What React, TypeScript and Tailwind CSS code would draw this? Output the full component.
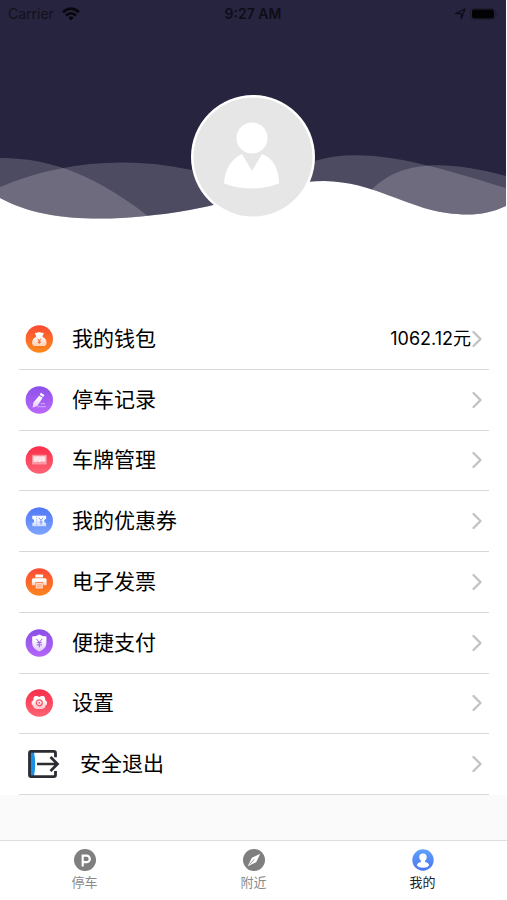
import React from 'react';
import { ChevronRight } from 'lucide-react';

type IconProps = { id: string; from: string; to: string; children: React.ReactNode };

const RoundIcon: React.FC<IconProps> = ({ id, from, to, children }) => (
  <svg viewBox="0 0 28 28" className="w-7 h-7 shrink-0" aria-hidden="true">
    <defs>
      <linearGradient id={id} x1="0" y1="0" x2="0" y2="1">
        <stop offset="0" stopColor={from} />
        <stop offset="1" stopColor={to} />
      </linearGradient>
      <linearGradient id={`${id}-fg`} x1="0" y1="0" x2="0" y2="1">
        <stop offset="0.3" stopColor="#fff" />
        <stop offset="1" stopColor="#fff" stopOpacity="0.65" />
      </linearGradient>
    </defs>
    <circle cx="14.3" cy="14" r="13.7" fill={`url(#${id})`} />
    {children}
  </svg>
);

const WalletIcon = () => (
  <RoundIcon id="wallet" from="#fb4a35" to="#fd8a1c">
    <path
      d="M10.2 7.6q1.4.7 2.4-.1 1.600-.9 3.200 0 1.200.8 2.700.1.600 1.700-1 3.200v1q4.200 2 4 6.200-.1 3.100-3 3.100h-8.400q-2.900 0-3-3.100-.1-4.200 4-6.200v-1q-1.400-1.500-.9-3.200z"
      fill="url(#wallet-fg)"
    />
    <path d="M12.600 13.600l1.700 2 1.700-2M12.800 16h3M12.800 17.500h3M14.300 15.600v3.300" stroke="#fb6330" strokeWidth="0.9" fill="none" />
  </RoundIcon>
);

const RecordIcon = () => (
  <RoundIcon id="record" from="#8d50ea" to="#b968fa">
    <path d="M15.900 6.800l3.500 2.100-1.200 2-3.500-2.100zM14.100 9.700l3.500 2.100-5.200 8.200-4.800 1.800.8-5.200z" fill="url(#record-fg)" />
    <path d="M15.500 17.700h4.500M12.500 20.700h8.500" stroke="#fff" strokeOpacity="0.55" strokeWidth="0.9" />
  </RoundIcon>
);

const PlateIcon = () => (
  <RoundIcon id="plate" from="#f92d4a" to="#fd6474">
    <rect x="7" y="8.800" width="14.800" height="9.800" rx="0.700" fill="#fff" fillOpacity="0.4" />
    <path d="M8.300 10.200h12.200v5l-1.600.9-2-.8-2.200.9-2-.8-2.200.8-2.200-.8z" fill="#fff" fillOpacity="0.75" />
  </RoundIcon>
);

const CouponIcon = () => (
  <RoundIcon id="coupon" from="#5078f6" to="#7da4fd">
    <path d="M7.300 8.700h13.800v3.300a2 2 0 0 0 0 4v3.300H7.300V16a2 2 0 0 0 0-4z" fill="url(#coupon-fg)" />
    <path d="M11.700 9.700v8.600" stroke="#6d91fa" strokeWidth="0.600" strokeDasharray="1.500 1" />
    <path d="M13.700 10.600l2.300 2.600 2.300-2.600M16 13.200v4.600M14.300 15h3.400" stroke="#6488f8" strokeWidth="0.8" fill="none" />
  </RoundIcon>
);

const InvoiceIcon = () => (
  <RoundIcon id="invoice" from="#fb4a35" to="#fd8420">
    <rect x="10.300" y="6.600" width="7.800" height="3" rx="0.500" fill="#fff" />
    <path d="M8.300 10.300h11.800q1.500 0 1.500 1.500v5.500h-3.300v-3h-8v3H6.900v-5.500q0-1.500 1.400-1.500z" fill="url(#invoice-fg)" />
    <rect x="10.700" y="15" width="7.200" height="5.500" fill="#fff" fillOpacity="0.7" />
    <path d="M12 16.800h4.600M12 18.600h4.600" stroke="#fd7a3a" strokeWidth="0.500" />
  </RoundIcon>
);

const PayIcon = () => (
  <RoundIcon id="pay" from="#8a4fe6" to="#b465f8">
    <path d="M14.300 5.500q3 2 7.100 2v6.500q0 5.400-7.100 8.600-7.100-3.200-7.100-8.600V7.500q4.100 0 7.100-2z" fill="url(#pay-fg)" />
    <path d="M11.300 9.800l3 3.600 3-3.600M14.300 13.400v5M11.700 13.700h5.200M11.700 15.900h5.200" stroke="#9d5aef" strokeWidth="1" fill="none" />
  </RoundIcon>
);

const SettingsIcon = () => (
  <RoundIcon id="settings" from="#f92d4a" to="#fd6474">
    <path
      d="M9.700 6.900h2.500l2.100 1 2.100-1h2.500l1.300 2.300-.1 1.900 1.900 1.600v2.500l-1.500 1.500-.7 2-2.300 1.300H11.100l-2.300-1.300-.7-2-1.500-1.500v-2.500l1.900-1.600-.1-1.900z"
      fill="url(#settings-fg)"
    />
    <circle cx="14.300" cy="13.800" r="3" fill="none" stroke="#fa4c61" strokeWidth="1.200" />
    <circle cx="14.300" cy="13.800" r="1" fill="#fb6878" />
  </RoundIcon>
);

const LogoutIcon = () => (
  <svg viewBox="0 0 32 28" className="w-8 h-7 shrink-0" fill="none" aria-hidden="true">
    <path d="M2 2h4q2.400 12 0 24H2z" fill="#1a8fe3" />
    <path
      d="M27.500 7.200V3q0-1.600-1.600-1.600H3.100q-1.600 0-1.600 1.600v22q0 1.600 1.600 1.600h22.800q1.600 0 1.600-1.600v-4"
      stroke="#2c2c33"
      strokeWidth="2.800"
    />
    <path d="M9 14h20.500M22.500 7l7 7-7 7" stroke="#2c2c33" strokeWidth="2.700" />
  </svg>
);

const menu = [
  { label: '我的钱包', icon: <WalletIcon />, value: '1062.12元' },
  { label: '停车记录', icon: <RecordIcon /> },
  { label: '车牌管理', icon: <PlateIcon /> },
  { label: '我的优惠券', icon: <CouponIcon /> },
  { label: '电子发票', icon: <InvoiceIcon /> },
  { label: '便捷支付', icon: <PayIcon /> },
  { label: '设置', icon: <SettingsIcon /> },
  { label: '安全退出', icon: <LogoutIcon />, wide: true },
];

const tabs = [
  {
    label: '停车',
    icon: (
      <>
        <circle cx="11" cy="11" r="11" fill="#7f7f7f" />
        <path d="M8.700 17.500V6.600h3.800a3.300 3.300 0 0 1 0 6.600H8.700" stroke="#fff" strokeWidth="2.200" fill="none" />
      </>
    ),
  },
  {
    label: '附近',
    icon: (
      <>
        <circle cx="11" cy="11" r="11" fill="#7f7f7f" />
        <path d="M17.200 4.800l-4 8.400-8.400 4 4-8.400z" fill="#fff" />
        <path d="M11.300 10.300l-4.500 5" stroke="#7f7f7f" strokeWidth="0.800" />
      </>
    ),
  },
  {
    label: '我的',
    active: true,
    icon: (
      <>
        <defs>
          <linearGradient id="tab-me" x1="0" y1="0" x2="0" y2="1">
            <stop offset="0" stopColor="#5fa2fb" />
            <stop offset="1" stopColor="#4a74f2" />
          </linearGradient>
        </defs>
        <circle cx="11" cy="11" r="10.700" fill="url(#tab-me)" />
        <path
          d="M11 4.500a3.800 3.800 0 0 1 3.800 3.800q0 2.200-1.800 3.600v1q3.900.8 4.200 3.300-1.400 2.500-6.200 2.500t-6.200-2.500q.3-2.500 4.200-3.300v-1Q7.200 10.500 7.200 8.300A3.800 3.800 0 0 1 11 4.500z"
          fill="#fff"
        />
      </>
    ),
  },
];

const StatusBar = () => (
  <div className="relative grid grid-cols-3 items-center h-7 px-2 text-sm text-[#0e0d17] font-[Inter,sans-serif]">
    <div className="flex items-center gap-2 text-[#12111b]">
      <span>Carrier</span>
      <svg viewBox="0 0 18 14" className="w-[18px] h-3.5" fill="none" stroke="#07060c" strokeWidth="2.600" aria-hidden="true">
        <path d="M1 5.300q8-7.200 16 0M4 8.500q5-4.500 10 0" />
        <path d="M9 13.500l-2.600-2.900q2.600-2 5.200 0z" fill="#07060c" stroke="none" />
      </svg>
    </div>
    <span className="text-center font-semibold">9:27 AM</span>
    <div className="flex items-center justify-end gap-1">
      <svg viewBox="0 0 12 12" className="w-3 h-3" fill="none" stroke="#0e0d17" strokeWidth="1.300" aria-hidden="true">
        <path d="M11 1L7.300 10.700V5.500H1.500z" strokeLinejoin="round" />
      </svg>
      <svg viewBox="0 0 28 12" className="w-7 h-3" aria-hidden="true">
        <rect x="0.500" y="0.500" width="25" height="11" rx="3" fill="none" stroke="#1f1c31" />
        <rect x="2" y="1.500" width="22" height="9" rx="2" fill="#030305" />
        <path d="M26.700 4v4q1-.6 1-2T26.700 4z" fill="#1f1c31" />
      </svg>
    </div>
  </div>
);

const Header = () => (
  <header className="relative h-[220px] mr-px">
    <svg viewBox="0 0 507 220" preserveAspectRatio="none" className="absolute inset-0 w-full h-full" aria-hidden="true">
      <defs>
        <clipPath id="wave">
          <path d="M0 0H507V206C488 215 470 216 448 213C405 207 375 182 325 181C280 181 240 202 190 210C115 223 45 223 0 198z" />
        </clipPath>
      </defs>
      <g clipPath="url(#wave)">
        <path d="M0 0H507V220H0z" fill="#27243f" />
        <g fill="#fff" fillOpacity="0.180">
          <path d="M0 158C55 158 100 178 152 219V220H0z" />
          <path d="M0 187C60 162 125 156 192 170L253 185L315 161C370 144 440 168 507 188V220H0z" />
          <path d="M370 192C398 162 440 158 507 176V220H340z" />
        </g>
      </g>
    </svg>
    <StatusBar />
    <svg
      viewBox="0 0 124 124"
      className="absolute left-1/2 top-[95px] -translate-x-1/2 w-[124px] h-[124px]"
      role="img"
      aria-label="头像"
    >
      <circle cx="62" cy="62" r="62" fill="#fff" />
      <circle cx="62" cy="62" r="59.500" fill="#e6e6e6" />
      <circle cx="61" cy="43" r="15.500" fill="#fff" />
      <path d="M51 59l10 17 10-17c11 4 17 15 17 29.500q-27 10-55 0C34 74 40 64 51 59z" fill="#fff" />
    </svg>
  </header>
);

const App: React.FC = () => {
  return (
    <div className="flex flex-col min-h-screen bg-[#fafafa] font-['Liberation_Sans','Noto_Sans_CJK_SC',sans-serif]">
      <div className="bg-white">
        <Header />
        <main className="pt-[89px] pl-[19px] pr-[18px]">
          <ul className="grid auto-rows-fr h-[486px]">
            {menu.map((item) => (
              <li key={item.label} className="border-b border-[#d8d8d8]">
                <button
                  type="button"
                  className={`flex items-center w-full h-full text-left text-black ${
                    item.wide ? 'pl-[9px] gap-5' : 'pl-1.5 gap-[19px]'
                  }`}
                >
                  {item.icon}
                  <span className="flex-1 text-[21px] leading-7">{item.label}</span>
                  <span className="flex items-center">
                    {item.value && (
                      <span className="text-lg leading-6 font-[Inter,'Noto_Sans_CJK_SC',sans-serif]">{item.value}</span>
                    )}
                    <ChevronRight size={28} strokeWidth={2} className="text-[#c2c2c4] -ml-2 -mr-0.5" />
                  </span>
                </button>
              </li>
            ))}
          </ul>
        </main>
      </div>

      <nav className="mt-auto grid grid-cols-3 h-[60px] bg-white border-t border-[#dedede]">
        {tabs.map((tab) => (
          <a
            key={tab.label}
            href="#"
            className={`flex flex-col items-center gap-0.5 pt-2 text-[13px] leading-5 ${
              tab.active ? 'text-[#222222]' : 'text-[#8a8a8a]'
            }`}
          >
            <svg viewBox="0 0 22 22" className="w-[22px] h-[22px]" aria-hidden="true">
              {tab.icon}
            </svg>
            {tab.label}
          </a>
        ))}
      </nav>
    </div>
  );
};

export default App;
